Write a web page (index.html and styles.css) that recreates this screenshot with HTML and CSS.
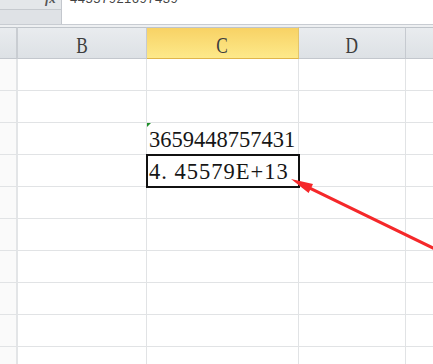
FILE: index.html
```html
<!DOCTYPE html>
<html>
  <head>
    <meta charset="utf-8" />
    <title>Sheet1</title>
    <link rel="stylesheet" href="styles.css">
  </head>

  <body>
    <div id="window">
      <!-- formula bar, only its lower edge is in view -->
      <div class="formula-bar">
        <div class="name-area">
          <div class="name-box"></div>
          <span class="fx">fx</span>
        </div>
        <div class="formula-input">
          <span class="formula-text">44557921697439</span>
        </div>
      </div>
      <div class="bar-gap"></div>

      <div class="sheet">
        <div class="col-head corner"></div>
        <div class="col-head"><span>B</span></div>
        <div class="col-head active"><span>C</span></div>
        <div class="col-head"><span>D</span></div>
        <div class="col-head last"></div>

        <div class="cell row-head"></div><div class="cell"></div><div class="cell"></div><div class="cell"></div><div class="cell last"></div>
        <div class="cell row-head"></div><div class="cell"></div><div class="cell"></div><div class="cell"></div><div class="cell last"></div>
        <div class="cell row-head"></div><div class="cell"></div><div class="cell value text-flag">3659448757431</div><div class="cell"></div><div class="cell last"></div>
        <div class="cell row-head"></div><div class="cell"></div><div class="cell value selected">4. 45579E+13</div><div class="cell"></div><div class="cell last"></div>
        <div class="cell row-head"></div><div class="cell"></div><div class="cell"></div><div class="cell"></div><div class="cell last"></div>
        <div class="cell row-head"></div><div class="cell"></div><div class="cell"></div><div class="cell"></div><div class="cell last"></div>
        <div class="cell row-head"></div><div class="cell"></div><div class="cell"></div><div class="cell"></div><div class="cell last"></div>
        <div class="cell row-head"></div><div class="cell"></div><div class="cell"></div><div class="cell"></div><div class="cell last"></div>
        <div class="cell row-head"></div><div class="cell"></div><div class="cell"></div><div class="cell"></div><div class="cell last"></div>
        <div class="cell row-head"></div><div class="cell"></div><div class="cell"></div><div class="cell"></div><div class="cell last"></div>
      </div>

      <!-- red annotation arrow -->
      <svg class="arrow" width="433" height="364" viewBox="0 0 433 364">
        <polygon fill="#f5282a"
          points="291,179 313,184.1 311.5,187.2 440.7,250 439.3,252.8 310.1,190 308.6,193.1" />
      </svg>
    </div>
  </body>
</html>
```

FILE: styles.css
```css
* {
  box-sizing: border-box;
}

body {
  margin: 0;
  background: #fff;
  font-family: 'Liberation Serif', serif;
}

#window {
  position: relative;
  width: 433px;
  height: 364px;
  overflow: hidden;
}

/* formula bar */

.formula-bar {
  display: flex;
  height: 25px;
  border-bottom: 1px solid #c8ccd2;
}

.name-area {
  position: relative;
  width: 62px;
  background: #dfe2e6;
  border-right: 1px solid #c3c7cd;
}

.name-box {
  height: 10px;
  border-bottom: 1px solid #c6cacf;
  background: #e4e7ea;
}

.fx {
  position: absolute;
  left: 45px;
  top: -9px;
  font-family: 'Liberation Serif', serif;
  font-style: italic;
  font-weight: bold;
  font-size: 13px;
  color: #555;
}

.formula-input {
  flex: 1;
  background: #fff;
  padding-left: 8px;
  overflow: hidden;
}

.formula-text {
  display: block;
  margin-top: -9px;
  font-family: 'Liberation Sans', sans-serif;
  font-size: 13px;
  color: #444;
  letter-spacing: 0.5px;
}

.bar-gap {
  height: 2px;
  background: #eef0f2;
}

/* grid */

.sheet {
  display: grid;
  grid-template-columns: 18px 129px 152px 107px 27px;
  grid-template-rows: 32px;
  grid-auto-rows: 32px;
}

.col-head {
  background: linear-gradient(#e9ecef, #dde1e5);
  border-top: 1px solid #bfc4ca;
  border-bottom: 1px solid #c3c7cd;
  border-right: 1px solid #c6cad0;
  text-align: center;
  padding-top: 5px;
  font-size: 24px;
  line-height: 1;
  color: #3d3d3d;
}

.col-head span {
  display: inline-block;
  transform: scaleX(0.72);
}

.col-head.corner {
  border-right: 2px solid #c9cdd2;
}

.col-head.active {
  background: linear-gradient(#f8d265, #fde98a);
  border-bottom-color: #e0b54a;
  border-right-color: #e3c56a;
}

.col-head.last {
  border-right: none;
}

.cell {
  position: relative;
  border-right: 1px solid #e1e3e5;
  border-bottom: 1px solid #e1e3e5;
}

.cell.last {
  border-right: none;
}

.cell.row-head {
  background: #fafafa;
  border-right: 2px solid #e3e5e7;
}

.value {
  display: flex;
  align-items: flex-end;
  padding: 0 0 3px 2px;
  font-size: 22.5px;
  line-height: 1;
  color: #161616;
  white-space: nowrap;
}

.selected {
  outline: 2px solid #111;
  outline-offset: -1px;
  z-index: 1;
  letter-spacing: 1px;
}

.text-flag::before {
  content: "";
  position: absolute;
  left: 0;
  top: 0;
  border-top: 4px solid #1f8f2a;
  border-right: 4px solid transparent;
}

.arrow {
  position: absolute;
  left: 0;
  top: 0;
  z-index: 2;
}
```
